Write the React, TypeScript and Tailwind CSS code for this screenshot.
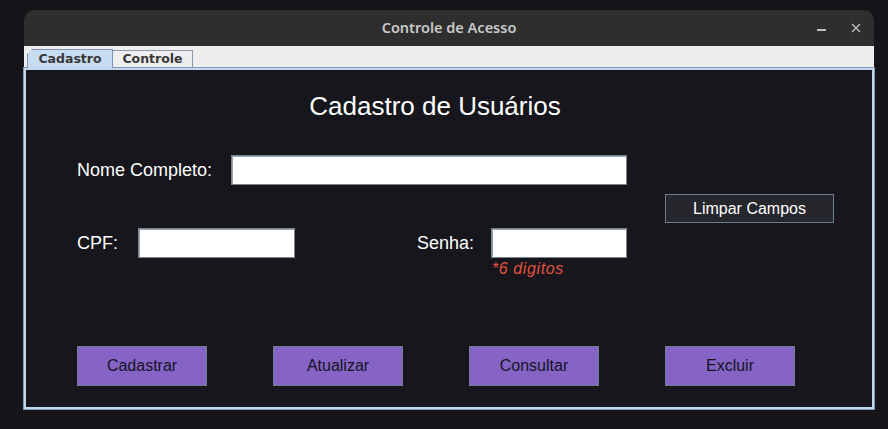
import React from "react";

// Simple Swing-like form window: "Controle de Acesso"
const actions = ["Cadastrar", "Atualizar", "Consultar", "Excluir"];

const TextBox: React.FC<{ className?: string }> = ({ className }) => (
  <div
    className={`h-[30px] border border-[#7a8592] bg-white shadow-[inset_1px_1px_0_#9aa3ad] ${className ?? ""}`}
  />
);

export default function App() {
  return (
    <div className="h-[429px] w-[888px] overflow-hidden bg-[#141419] pt-[10px] pl-[24px]">
      <div className="w-[850px]">
        {/* Title bar */}
        <div className="grid h-[36px] grid-cols-[1fr_auto_1fr] items-center rounded-t-[10px] bg-[#2e2e2e] px-3">
          <div />
          <span className="font-['Noto_Sans',sans-serif] text-[14.5px] font-semibold text-[#c9c9c9]">
            Controle de Acesso
          </span>
          <div className="flex items-center justify-end gap-[25px] pr-[1px] text-[#bdbdbd]">
            <span className="mt-[4px] block h-[1.5px] w-[9px] bg-[#bdbdbd]" />
            <svg width="10" height="10" viewBox="0 0 10 10" className="-mt-[1px]">
              <path d="M1 1 L9 9 M9 1 L1 9" stroke="#bdbdbd" strokeWidth="1.4" />
            </svg>
          </div>
        </div>

        {/* Tabs */}
        <div className="flex h-[22px] items-end bg-[#eeeeee] pl-[3px]">
          <div className="flex h-[19px] w-[86px] items-center justify-center border border-b-0 border-[#7d93bb] bg-[#c8dcf1] [clip-path:polygon(5px_0,100%_0,100%_100%,0_100%,0_5px)] font-['DejaVu_Sans',sans-serif] text-[12.5px] font-bold text-[#383838]">
            Cadastro
          </div>
          <div className="flex h-[18px] w-[80px] items-center justify-center border border-b-0 border-l-0 border-[#8a97ad] bg-[#eeeeee] font-['DejaVu_Sans',sans-serif] text-[12.5px] font-bold text-[#383838]">
            Controle
          </div>
        </div>

        {/* Content panel */}
        <div className="h-[341px] border-2 border-[#c3d7ec] bg-[#16161c] font-['Liberation_Sans',Arial,sans-serif] outline outline-1 outline-[#8499b8]">
          <div className="pt-[21px] pr-[28px] text-center text-[26px] leading-[30px] text-white">
            Cadastro de Usuários
          </div>

          <div className="mt-[34px] flex pl-[51px]">
            <div className="w-[550px]">
              <div className="flex items-center">
                <span className="w-[154px] text-[18px] text-white">Nome Completo:</span>
                <TextBox className="w-[396px]" />
              </div>
              <div className="mt-[43px] flex items-center">
                <span className="w-[61px] text-[18px] text-white">CPF:</span>
                <TextBox className="w-[157px]" />
                <span className="ml-[122px] w-[74px] text-[18px] text-white">Senha:</span>
                <TextBox className="w-[136px]" />
              </div>
              <div className="mt-[2px] pl-[415px] text-[16px] italic leading-[18px] tracking-[0.6px] text-[#e4523f]">
                *6 digitos
              </div>
            </div>
            <div className="ml-[38px] mt-[39px]">
              <button className="h-[29px] w-[169px] border border-[#6d7c8a] bg-[#26262d] text-[16px] text-white">
                Limpar Campos
              </button>
            </div>
          </div>

          <div className="mt-[68px] flex gap-[66px] pl-[51px]">
            {actions.map((label) => (
              <button
                key={label}
                className="h-[40px] w-[130px] border border-[#6f7d8c] bg-[#8564c6] text-[16px] text-[#15131f]"
              >
                {label}
              </button>
            ))}
          </div>
        </div>
      </div>
    </div>
  );
}
